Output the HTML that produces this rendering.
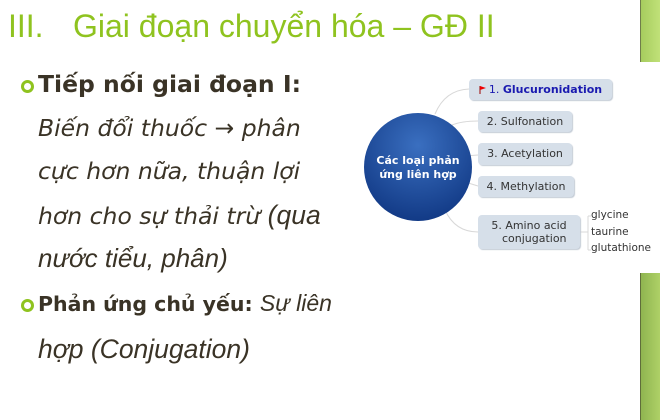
<!DOCTYPE html>
<html><head><meta charset="utf-8"><style>
*{margin:0;padding:0}
body{width:660px;height:420px;background:#fff;position:relative;overflow:hidden;font-family:"DejaVu Sans",sans-serif;color:#3a3326}
.t{position:absolute;white-space:nowrap}
.title{font-family:"Liberation Sans",sans-serif;font-size:32px;color:#8fc31f;top:8px}
.l{font-size:23.5px;left:38px}
.i{font-style:italic}
.b{font-weight:bold}
.dot{position:absolute;left:21px;width:7px;height:7px;border:3px solid #8fc31f;border-radius:50%}
.box{position:absolute;background:#d6dfe9;border-radius:4px;font-size:11px;color:#333;text-align:center;box-shadow:1px 1px 1px #c4ccd6}
.g{position:absolute;left:591px;font-size:10.5px;color:#333}
</style></head><body>
<div style="position:absolute;left:640px;top:0;width:20px;height:62px;background:linear-gradient(90deg,#a6cc5e,#c2e27a);border-left:1.5px solid #6f7d4a"></div>
<div style="position:absolute;left:640px;top:273px;width:20px;height:147px;background:linear-gradient(90deg,#8fb550,#b0d268);border-left:1.5px solid #5f6e3a"></div>
<div class="t title" style="left:8px">III.</div>
<div class="t title" style="left:73px">Giai đoạn chuyển hóa – GĐ II</div>
<div class="dot" style="top:80px"></div>
<div class="t l b" style="top:70px">Tiếp nối giai đoạn I:</div>
<div class="t l i" style="top:114px">Biến đổi thuốc → phân</div>
<div class="t l i" style="top:157px">cực hơn nữa, thuận lợi</div>
<div class="t l" style="top:200px"><span class="i">hơn cho sự thải trừ</span> <span style="font-family:'Liberation Sans',sans-serif;font-style:italic;font-size:26.5px">(qua</span></div>
<div class="t l i" style="top:243px;font-family:'Liberation Sans',sans-serif;font-size:26px">nước tiểu, phân)</div>
<div class="dot" style="top:299px"></div>
<div class="t l b" style="top:290px;font-size:20.5px">Phản ứng chủ yếu: <span style="font-weight:normal;font-style:italic;font-family:'Liberation Sans',sans-serif;font-size:23px">Sự liên</span></div>
<div class="t l i" style="top:334px;font-family:'Liberation Sans',sans-serif;font-size:26.5px">hợp (Conjugation)</div>
<svg style="position:absolute;left:0;top:0" width="660" height="420">
<g stroke="#d8d8d8" fill="none" stroke-width="1">
<path d="M435 114 Q445 90 469 89"/><path d="M452 125 Q462 121 478 121"/><path d="M465 156 L478 155"/><path d="M465 182 L478 186"/><path d="M445 210 Q455 232 478 232"/>
<path d="M580 232 L588 232 M588 216 L588 250 M588 216 L591 216 M588 250 L591 250"/>
</g>
<defs><radialGradient id="rg" cx="0.5" cy="0.3" r="0.7"><stop offset="0" stop-color="#3a6fc0"/><stop offset="1" stop-color="#123a86"/></radialGradient></defs>
<circle cx="418" cy="167" r="54" fill="url(#rg)"/>
<text x="418" y="164" text-anchor="middle" font-family="DejaVu Sans" font-weight="bold" font-size="11" fill="#fff">Các loại phản</text>
<text x="418" y="178" text-anchor="middle" font-family="DejaVu Sans" font-weight="bold" font-size="11" fill="#fff">ứng liên hợp</text>
</svg>
<div class="box" style="left:469px;top:79px;width:143px;height:21px;line-height:21px;color:#1a1ab0;padding-left:10px;box-sizing:border-box">1. <b>Glucuronidation</b></div>
<svg style="position:absolute;left:477px;top:84px" width="10" height="12"><path d="M3 2 L3 10" stroke="#900" stroke-width="1"/><path d="M3 2 L9 4 L3 6Z" fill="#e00"/></svg>
<div class="box" style="left:478px;top:111px;width:94px;height:21px;line-height:21px">2. Sulfonation</div>
<div class="box" style="left:478px;top:143px;width:94px;height:22px;line-height:22px">3. Acetylation</div>
<div class="box" style="left:478px;top:176px;width:96px;height:21px;line-height:21px">4. Methylation</div>
<div class="box" style="left:478px;top:215px;width:102px;height:34px;line-height:13px;padding-top:4px;box-sizing:border-box">5. Amino acid<br>&nbsp;&nbsp;&nbsp;conjugation</div>
<div class="g" style="top:209px">glycine</div>
<div class="g" style="top:226px">taurine</div>
<div class="g" style="top:242px">glutathione</div>
</body></html>
